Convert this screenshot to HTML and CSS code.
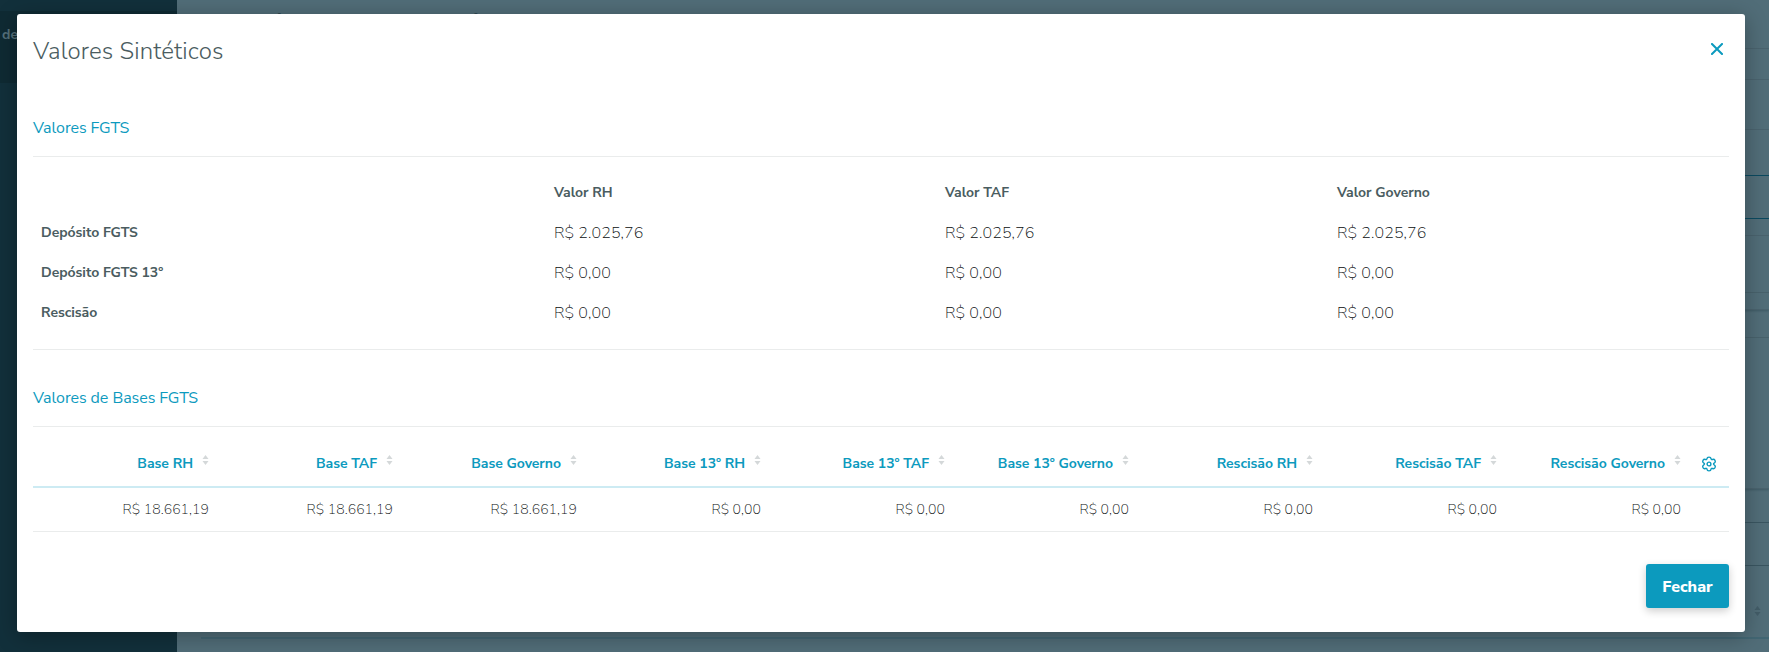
FILE: index.html
```html
<!DOCTYPE html>
<html lang="pt-BR">
<head>
    <meta charset="UTF-8">
    <meta name="viewport" content="width=device-width, initial-scale=1.0">
    <title>Valores Sintéticos</title>
    <link rel="stylesheet" href="styles.css">
</head>
<body>
    <div class="app">
        <aside class="sidebar">
            <div class="sidebar-head">de</div>
        </aside>
        <main class="page">
            <h2 class="page-title">Relatório de Conferência</h2>
            <div class="line l1"></div>
            <div class="line l2"></div>
            <div class="line l3"></div>
            <div class="line l4 teal"></div>
            <div class="line l5 teal"></div>
            <div class="line l6"></div>
            <div class="line l7"></div>
            <div class="line l8 shade"></div>
            <div class="line l9"></div>
            <div class="line l10 shade"></div>
            <div class="line l11 dark"></div>
            <div class="line l12 dark"></div>
            <div class="page-table">
                <span>Governo</span>
                <svg class="sort" width="7" height="10" viewBox="0 0 7 10"><path d="M3.5 0 6.5 4h-6zM3.5 10 .5 6h6z"/></svg>
            </div>
        </main>
    </div>

    <div class="modal">
        <header class="modal-head">
            <h1>Valores Sintéticos</h1>
            <button class="close" aria-label="Fechar janela">
                <svg width="12" height="12" viewBox="0 0 12 12"><path d="M1 1l10 10M11 1L1 11"/></svg>
            </button>
        </header>

        <h3 class="section-title">Valores FGTS</h3>
        <div class="values">
            <span></span><b>Valor RH</b><b>Valor TAF</b><b>Valor Governo</b>
            <b>Depósito FGTS</b><span>R$ 2.025,76</span><span>R$ 2.025,76</span><span>R$ 2.025,76</span>
            <b>Depósito FGTS 13º</b><span>R$ 0,00</span><span>R$ 0,00</span><span>R$ 0,00</span>
            <b>Rescisão</b><span>R$ 0,00</span><span>R$ 0,00</span><span>R$ 0,00</span>
        </div>

        <h3 class="section-title bases-title">Valores de Bases FGTS</h3>
        <table class="bases">
            <thead>
                <tr>
                    <th>Base RH<svg class="sort" width="7" height="10" viewBox="0 0 7 10"><path d="M3.5 0 6.5 4h-6zM3.5 10 .5 6h6z"/></svg></th>
                    <th>Base TAF<svg class="sort" width="7" height="10" viewBox="0 0 7 10"><path d="M3.5 0 6.5 4h-6zM3.5 10 .5 6h6z"/></svg></th>
                    <th>Base Governo<svg class="sort" width="7" height="10" viewBox="0 0 7 10"><path d="M3.5 0 6.5 4h-6zM3.5 10 .5 6h6z"/></svg></th>
                    <th>Base 13º RH<svg class="sort" width="7" height="10" viewBox="0 0 7 10"><path d="M3.5 0 6.5 4h-6zM3.5 10 .5 6h6z"/></svg></th>
                    <th>Base 13º TAF<svg class="sort" width="7" height="10" viewBox="0 0 7 10"><path d="M3.5 0 6.5 4h-6zM3.5 10 .5 6h6z"/></svg></th>
                    <th>Base 13º Governo<svg class="sort" width="7" height="10" viewBox="0 0 7 10"><path d="M3.5 0 6.5 4h-6zM3.5 10 .5 6h6z"/></svg></th>
                    <th>Rescisão RH<svg class="sort" width="7" height="10" viewBox="0 0 7 10"><path d="M3.5 0 6.5 4h-6zM3.5 10 .5 6h6z"/></svg></th>
                    <th>Rescisão TAF<svg class="sort" width="7" height="10" viewBox="0 0 7 10"><path d="M3.5 0 6.5 4h-6zM3.5 10 .5 6h6z"/></svg></th>
                    <th>Rescisão Governo<svg class="sort" width="7" height="10" viewBox="0 0 7 10"><path d="M3.5 0 6.5 4h-6zM3.5 10 .5 6h6z"/></svg></th>
                    <th class="tools">
                        <svg class="gear" width="16" height="16" viewBox="0 0 16 16">
                            <path d="M6 2.700Q6.100 1.100 8 1.100t2 1.600q.3 1.300 1.600.8 1.500-.6 2.400.9.900 1.600-.5 2.500-1 .6-1 1.100t1 1.100q1.400.9.500 2.500-.9 1.500-2.400.9-1.300-.5-1.600.8Q9.900 14.900 8 14.900t-2-1.600q-.3-1.300-1.600-.8-1.500.6-2.400-.9-.9-1.600.5-2.500 1-.6 1-1.100t-1-1.100q-1.400-.9-.5-2.500.9-1.500 2.400-.9 1.300.5 1.600-.8z"/>
                            <circle cx="8" cy="8" r="1.900"/>
                        </svg>
                    </th>
                </tr>
            </thead>
            <tbody>
                <tr>
                    <td>R$ 18.661,19</td>
                    <td>R$ 18.661,19</td>
                    <td>R$ 18.661,19</td>
                    <td>R$ 0,00</td>
                    <td>R$ 0,00</td>
                    <td>R$ 0,00</td>
                    <td>R$ 0,00</td>
                    <td>R$ 0,00</td>
                    <td>R$ 0,00</td>
                    <td></td>
                </tr>
            </tbody>
        </table>

        <footer class="modal-foot">
            <button class="btn">Fechar</button>
        </footer>
    </div>
</body>
</html>
```
FILE: styles.css
```css
* {
    box-sizing: border-box;
}
body {
    margin: 0;
    height: 652px;
    overflow: hidden;
    font-family: "Nunito Sans", Lato, sans-serif;
    color: #4a5c60;
    background: #516d78;
}
h1, h2, h3 {
    margin: 0;
    font-weight: 400;
}
button {
    border: none;
    font-family: inherit;
    cursor: pointer;
}

/* page behind the modal */
.app {
    display: flex;
    height: 652px;
}
.sidebar {
    width: 177px;
    padding-top: 11px;
    background: #12303b;
}
.sidebar-head {
    height: 72px;
    padding: 14px 2px;
    background: #0f2a33;
    color: #55707a;
    font-size: 14px;
    line-height: 20px;
    font-weight: 700;
}
.page {
    flex: 1;
    display: flex;
    flex-direction: column;
}
.page-title {
    height: 48px;
    padding: 11px 24px 0;
    color: #102a33;
    font-size: 28px;
    line-height: 30px;
    font-weight: 600;
    word-spacing: 10px;
}
.line {
    flex: none;
    border-bottom: 1px solid #4a636e;
}
.teal { border-color: #0b4a60; }
.dark { border-color: #3a5661; }
.shade { box-shadow: 0 1px 2px rgba(20, 50, 60, 0.3); }
.l1 { height: 1px; }
.l2 { height: 31px; }
.l3 { height: 50px; }
.l4 { height: 46px; }
.l5 { height: 43px; }
.l6 { height: 17px; }
.l7 { height: 57px; }
.l8 { height: 17px; }
.l9 { height: 28px; }
.l10 { height: 151px; }
.l11 { height: 34px; }
.l12 { height: 43px; }
.page-table {
    display: flex;
    justify-content: flex-end;
    height: 73px;
    margin-left: 24px;
    padding: 40px 8px 0 0;
    gap: 8px;
    border-bottom: 2px solid #426673;
    color: #17404f;
    font-size: 14px;
    font-weight: 600;
}
.page-table .sort {
    margin-left: 2px;
    fill: #435d68;
}

/* modal */
.modal {
    position: absolute;
    left: 17px;
    top: 14px;
    width: 1728px;
    height: 618px;
    padding: 0 16px;
    border-radius: 3px;
    background: #fff;
    box-shadow: 0 4px 22px rgba(0, 0, 0, 0.3);
}
.modal-head {
    display: flex;
    justify-content: space-between;
    align-items: flex-start;
    height: 93px;
    padding-top: 22px;
}
.modal-head h1 {
    font-size: 24px;
    line-height: 30px;
    font-weight: 300;
    letter-spacing: 0.13px;
}
.close {
    padding: 7px 6px;
    background: none;
    line-height: 0;
}
.close svg {
    fill: none;
    stroke: #0c9abe;
    stroke-width: 2;
    stroke-linecap: square;
}
.section-title {
    height: 50px;
    padding-top: 10px;
    border-bottom: 1px solid #eaecec;
    color: #0c9abe;
    font-size: 16px;
    line-height: 22px;
    letter-spacing: -0.06px;
}
.values {
    display: grid;
    grid-template-columns: 513px 391px 392px 1fr;
    grid-auto-rows: 40px;
    align-items: center;
    height: 193px;
    padding: 15px 8px 0;
    border-bottom: 1px solid #eaecec;
}
.values b {
    font-size: 14px;
    font-weight: 700;
    letter-spacing: -0.04px;
}
.values span {
    padding-top: 2px;
    color: #080c0d;
    font-size: 16px;
    font-weight: 250;
    letter-spacing: 0.1px;
}
.bases-title {
    height: 77px;
    padding-top: 37px;
}
.bases {
    width: 100%;
    table-layout: fixed;
    border-collapse: separate;
    border-spacing: 0;
}
.bases th {
    width: 184px;
    height: 61px;
    padding: 14px 8px 0 0;
    border-bottom: 2px solid #cdebf3;
    color: #0c9abe;
    font-size: 14px;
    font-weight: 700;
    letter-spacing: -0.04px;
    text-align: right;
    white-space: nowrap;
}
.bases .tools {
    width: 40px;
    padding-right: 12px;
}
.bases td {
    height: 44px;
    padding: 0 8px 0 0;
    border-bottom: 1px solid #eaecec;
    color: #080c0d;
    font-size: 14px;
    font-weight: 250;
    letter-spacing: 0.06px;
    text-align: right;
}
.sort {
    margin-left: 9px;
    fill: #d4d8d9;
}
.bases .sort {
    vertical-align: 3px;
}
.gear {
    display: block;
    margin-left: auto;
    fill: none;
    stroke: #0c9abe;
    stroke-width: 1.4;
}
.modal-foot {
    display: flex;
    justify-content: flex-end;
    padding-top: 32px;
}
.btn {
    width: 83px;
    height: 44px;
    padding-top: 3px;
    border-radius: 3px;
    background: #0c9abe;
    color: #fff;
    font-size: 16px;
    font-weight: 800;
    box-shadow: 0 3px 8px rgba(0, 0, 0, 0.2);
}
```
